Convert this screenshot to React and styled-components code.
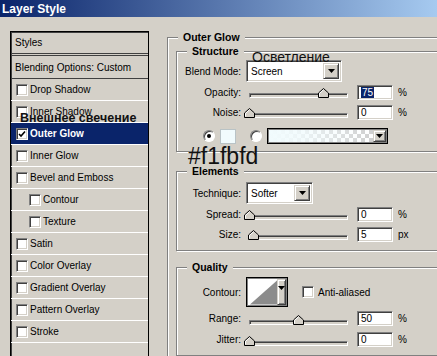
import React from 'react';
import styled, { createGlobalStyle } from 'styled-components';

const GlobalStyle = createGlobalStyle`
  html, body {
    margin: 0;
    padding: 0;
    background: #d4d0c8;
    overflow: hidden;
  }
  body {
    font-family: "Liberation Sans", Arial, sans-serif;
    font-size: 10px;
    color: #000;
  }
  * {
    box-sizing: border-box;
  }
`;

const Window = styled.div`
  position: relative;
  width: 437px;
  height: 356px;
  overflow: hidden;
  background: #d4d0c8;
`;

const TitleBar = styled.div`
  height: 17px;
  padding-left: 2px;
  display: flex;
  align-items: center;
  background: linear-gradient(to right, #0a246a, #a6caf0);
  color: #fff;
  font-weight: bold;
  font-size: 12px;
`;

const Body = styled.div`
  display: flex;
  gap: 18px;
  padding: 14px 0 0 10px;
`;

// ---- left styles list ----
const StyleList = styled.div`
  width: 139px;
  flex: none;
  height: 340px;
  border: 1px solid #000;
  border-bottom: none;
  box-shadow: inset 1px 1px 0 #404040;
`;

const ListHead = styled.div`
  height: ${(p) => p.$h}px;
  padding-left: 4px;
  display: flex;
  align-items: center;
  border-bottom: ${(p) => p.$line};
`;

const StyleRow = styled.div`
  height: 22px;
  display: flex;
  align-items: center;
  gap: 2px;
  padding-left: ${(p) => (p.$indent ? 18 : 5)}px;
  border-bottom: 1px solid #fff;
  background: ${(p) => (p.$active ? '#0a246a' : 'transparent')};
  color: ${(p) => (p.$active ? '#fff' : '#000')};
  font-weight: ${(p) => (p.$active ? 'bold' : 'normal')};
`;

const Check = styled.span`
  width: 12px;
  height: 12px;
  flex: none;
  background: #fff;
  border: 1px solid;
  border-color: #808080 #fff #fff #808080;
  box-shadow: inset 1px 1px 0 #404040, inset -1px -1px 0 #d4d0c8;
  display: flex;
  align-items: center;
  justify-content: center;
`;

// ---- right options panel ----
const RightCol = styled.div`
  width: 300px;
  flex: none;
`;

const Group = styled.fieldset`
  margin: ${(p) => p.$mt || 0}px 0 0 0;
  padding: ${(p) => p.$pt}px 0 ${(p) => p.$pb}px 8px;
  border: 1px solid #808080;
  box-shadow: 1px 1px 0 #fff, inset 1px 1px 0 #fff;
  min-width: 0;
`;

const Legend = styled.legend`
  margin-left: 2px;
  padding: 0 5px;
  font-weight: bold;
  font-size: 10.5px;
  line-height: 13px;
  background: #d4d0c8;
`;

const Form = styled.div`
  display: grid;
  grid-template-columns: 56px auto;
  grid-template-rows: ${(p) => p.$rows};
  column-gap: 5px;
  align-items: center;
`;

const Label = styled.div`
  text-align: right;
  white-space: nowrap;
`;

const Controls = styled.div`
  display: flex;
  align-items: center;
  gap: 5px;
`;

const Sunken = styled.div`
  background: #fff;
  border: 1px solid;
  border-color: #808080 #fff #fff #808080;
  box-shadow: inset 1px 1px 0 #404040, inset -1px -1px 0 #d4d0c8;
`;

const Select = styled(Sunken)`
  width: ${(p) => p.$w}px;
  height: 22px;
  display: flex;
  align-items: stretch;
  justify-content: space-between;
  padding: 2px;
`;

const SelectText = styled.span`
  display: flex;
  align-items: center;
  padding-left: 2px;
`;

const DropBtn = styled.span`
  width: ${(p) => p.$w || 16}px;
  background: #d4d0c8;
  border: 1px solid;
  border-color: #d4d0c8 #404040 #404040 #d4d0c8;
  box-shadow: inset 1px 1px 0 #fff, inset -1px -1px 0 #808080;
  display: flex;
  align-items: ${(p) => p.$align || 'center'};
  justify-content: center;
  padding-top: ${(p) => p.$pad || 0}px;
`;

const Slider = styled.div`
  position: relative;
  width: 106px;
  height: 14px;
  flex: none;
  display: flex;
  align-items: flex-end;
  padding: 0 4px 1px 3px;
`;

const Track = styled.div`
  flex: 1;
  height: 5px;
  background: #d4d0c8;
  border: 1px solid;
  border-color: #808080 #fff #fff #808080;
  box-shadow: inset 1px 1px 0 #404040;
`;

const ThumbSvg = styled.svg`
  position: absolute;
  bottom: 1px;
`;

const Field = styled(Sunken)`
  width: 36px;
  height: 15px;
  padding: 0 3px;
  display: flex;
  align-items: center;
`;

const Selected = styled.span`
  background: #0a246a;
  color: #fff;
  padding: 0 1px;
  line-height: 11px;
`;

const ColorRow = styled.div`
  display: flex;
  align-items: center;
  height: 16px;
  margin-top: 6px;
  padding-left: 18px;
`;

const Radio = styled.span`
  width: 12px;
  height: 12px;
  flex: none;
  border-radius: 50%;
  background: #fff;
  border: 1px solid;
  border-color: #808080 #fff #fff #808080;
  box-shadow: inset 1px 1px 0 #404040;
  display: flex;
  align-items: center;
  justify-content: center;
  margin-right: ${(p) => p.$mr}px;
  &::after {
    content: '';
    width: 4px;
    height: 4px;
    border-radius: 50%;
    background: #000;
    display: ${(p) => (p.$on ? 'block' : 'none')};
  }
`;

const Swatch = styled.span`
  width: 16px;
  height: 15px;
  flex: none;
  background: #f1fbfd;
  border: 1px solid #b9c3c6;
  margin-right: 14px;
`;

const GradientBox = styled.div`
  width: 121px;
  height: 16px;
  display: flex;
  border: 1px solid #000;
  box-shadow: inset 0 0 0 1px #808080;
  padding: 1px;
`;

const GradientFill = styled.div`
  flex: 1;
  background:
    linear-gradient(to right, #f1fbfd 0%, rgba(241, 251, 253, 0.85) 30%, rgba(241, 251, 253, 0) 100%),
    conic-gradient(#cfcfcf 25%, #fff 0 50%, #cfcfcf 0 75%, #fff 0) 0 0 / 8px 8px;
`;

const ContourBox = styled.div`
  width: 42px;
  height: 30px;
  display: flex;
  border: 1px solid #000;
  box-shadow: inset 0 0 0 1px #808080;
  padding: 1px;
  background: #fff;
`;

const Option = styled.div`
  display: flex;
  align-items: center;
  gap: 4px;
  margin-left: 9px;
`;

const Note = styled.div`
  position: absolute;
  left: ${(p) => p.$x}px;
  top: ${(p) => p.$y}px;
  font-size: ${(p) => p.$size}px;
  line-height: ${(p) => p.$lh}px;
  font-weight: ${(p) => (p.$bold ? 'bold' : 'normal')};
  color: #111;
  white-space: nowrap;
`;

const ArrowDown = () => (
  <svg width="7" height="4" viewBox="0 0 7 4">
    <polygon points="0,0 7,0 3.5,4" fill="#000" />
  </svg>
);

const Tick = () => (
  <svg width="8" height="8" viewBox="0 0 8 8">
    <polyline points="1,4 3,6 7,1.5" fill="none" stroke="#000" strokeWidth="1.6" />
  </svg>
);

const SliderControl = ({ value }) => (
  <Slider>
    <Track />
    <ThumbSvg
      width="11"
      height="10"
      viewBox="0 0 11 10"
      style={{ left: 3 + value * 0.99 - 5.5 }}
    >
      <polygon points="0.5,9.5 0.5,5 5.5,0.5 10.5,5 10.5,9.5" fill="#d4d0c8" stroke="#000" />
      <polyline points="1.5,8.5 1.5,5.4 5.5,1.8" fill="none" stroke="#fff" />
    </ThumbSvg>
  </Slider>
);

const SliderRow = ({ label, value, text, unit, selected }) => (
  <>
    <Label>{label}</Label>
    <Controls>
      <SliderControl value={value} />
      <Field>{selected ? <Selected>{text}</Selected> : text}</Field>
      <span>{unit}</span>
    </Controls>
  </>
);

const styleItems = [
  { label: 'Drop Shadow' },
  { label: 'Inner Shadow' },
  { label: 'Outer Glow', active: true, checked: true },
  { label: 'Inner Glow' },
  { label: 'Bevel and Emboss' },
  { label: 'Contour', indent: true },
  { label: 'Texture', indent: true },
  { label: 'Satin' },
  { label: 'Color Overlay' },
  { label: 'Gradient Overlay' },
  { label: 'Pattern Overlay' },
  { label: 'Stroke' },
];

export default function App() {
  return (
    <Window>
      <GlobalStyle />
      <TitleBar>Layer Style</TitleBar>
      <Body>
        <StyleList>
          <ListHead $h={24} $line="3px double #404040">
            Styles
          </ListHead>
          <ListHead $h={23} $line="1px solid #404040">
            Blending Options: Custom
          </ListHead>
          {styleItems.map((item) => (
            <StyleRow key={item.label} $indent={item.indent} $active={item.active}>
              <Check>{item.checked && <Tick />}</Check>
              <span>{item.label}</span>
            </StyleRow>
          ))}
        </StyleList>

        <RightCol>
          <Group $pt={1} $pb={10}>
            <Legend>Outer Glow</Legend>

            <Group $pt={2} $pb={7}>
              <Legend>Structure</Legend>
              <Form $rows="22px 20px 20px">
                <Label>Blend Mode:</Label>
                <Controls>
                  <Select $w={96}>
                    <SelectText>Screen</SelectText>
                    <DropBtn>
                      <ArrowDown />
                    </DropBtn>
                  </Select>
                </Controls>
                <SliderRow label="Opacity:" value={75} text="75" unit="%" selected />
                <SliderRow label="Noise:" value={0} text="0" unit="%" />
              </Form>
              <ColorRow>
                <Radio $on $mr={5} />
                <Swatch />
                <Radio $mr={5} />
                <GradientBox>
                  <GradientFill />
                  <DropBtn $w={13}>
                    <ArrowDown />
                  </DropBtn>
                </GradientBox>
              </ColorRow>
            </Group>

            <Group $mt={13} $pt={4} $pb={6}>
              <Legend>Elements</Legend>
              <Form $rows="22px 20px 20px">
                <Label>Technique:</Label>
                <Controls>
                  <Select $w={67}>
                    <SelectText>Softer</SelectText>
                    <DropBtn>
                      <ArrowDown />
                    </DropBtn>
                  </Select>
                </Controls>
                <SliderRow label="Spread:" value={0} text="0" unit="%" />
                <SliderRow label="Size:" value={5} text="5" unit="px" />
              </Form>
            </Group>

            <Group $mt={10} $pt={2} $pb={5}>
              <Legend>Quality</Legend>
              <Form $rows="32px 21px 21px">
                <Label>Contour:</Label>
                <Controls>
                  <ContourBox>
                    <svg width="30" height="26" viewBox="0 0 30 26">
                      <rect width="30" height="26" fill="#fff" />
                      <polygon points="2,26 30,1 30,26" fill="#8c8c8c" />
                    </svg>
                    <DropBtn $w={9} $align="flex-start" $pad={6}>
                      <ArrowDown />
                    </DropBtn>
                  </ContourBox>
                  <Option>
                    <Check />
                    <span>Anti-aliased</span>
                  </Option>
                </Controls>
                <SliderRow label="Range:" value={50} text="50" unit="%" />
                <SliderRow label="Jitter:" value={0} text="0" unit="%" />
              </Form>
            </Group>
          </Group>
        </RightCol>
      </Body>

      <Note $x={252} $y={49} $size={14} $lh={16}>
        Осветление
      </Note>
      <Note $x={20} $y={111} $size={12.5} $lh={14} $bold>
        Внешнее свечение
      </Note>
      <Note $x={188} $y={146} $size={23} $lh={21}>
        #f1fbfd
      </Note>
    </Window>
  );
}
